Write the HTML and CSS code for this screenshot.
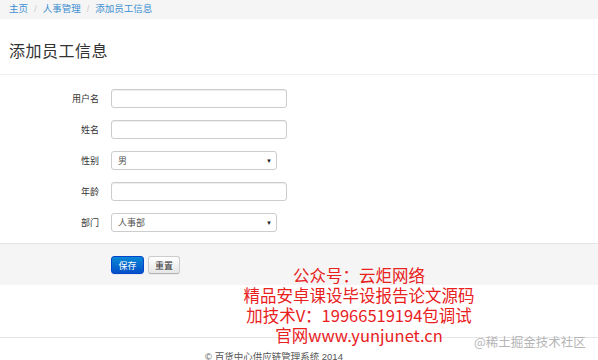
FILE: index.html
```html
<!DOCTYPE html>
<html lang="zh-CN">
<head>
    <meta charset="UTF-8">
    <meta name="viewport" content="width=device-width, initial-scale=1.0">
    <title>添加员工信息</title>
    <link rel="stylesheet" href="styles.css">
</head>
<body>

    <ul class="breadcrumb">
        <li><a href="#">主页</a><span class="divider">/</span></li>
        <li><a href="#">人事管理</a><span class="divider">/</span></li>
        <li><a href="#">添加员工信息</a></li>
    </ul>

    <div class="page-header">
        <h1>添加员工信息</h1>
    </div>

    <form class="form-horizontal">
        <div class="control-group">
            <label>用户名</label>
            <input type="text">
        </div>
        <div class="control-group">
            <label>姓名</label>
            <input type="text">
        </div>
        <div class="control-group">
            <label>性别</label>
            <div class="select"><span>男</span><i>▼</i></div>
        </div>
        <div class="control-group">
            <label>年龄</label>
            <input type="text">
        </div>
        <div class="control-group">
            <label>部门</label>
            <div class="select"><span>人事部</span><i>▼</i></div>
        </div>

        <div class="form-actions">
            <button type="button" class="btn btn-primary">保存</button>
            <button type="button" class="btn">重置</button>
        </div>
    </form>

    <div class="footer">© 百货中心供应链管理系统 2014</div>

    <div class="promo">
        公众号：云炬网络<br>
        精品安卓课设毕设报告论文源码<br>
        加技术V：19966519194包调试<br>
        官网www.yunjunet.cn
    </div>
    <div class="mark">@稀土掘金技术社区</div>

</body>
</html>
```

FILE: styles.css
```css
body {
    margin: 0;
    font-family: "Liberation Sans", "Noto Sans CJK SC", sans-serif;
    color: #333;
    background: white;
    position: relative;
    height: 360px;
    overflow: hidden;
}
.breadcrumb {
    margin: 0;
    padding: 0 9px;
    height: 19px;
    line-height: 18px;
    list-style: none;
    background-color: #f5f5f5;
    font-size: 9.5px;
    display: flex;
}
.breadcrumb a {
    color: #3d8fd1;
    text-decoration: none;
}
.breadcrumb .divider {
    color: #ccc;
    padding: 0 6px;
}
.page-header {
    height: 55px;
    padding: 0 9px;
    border-bottom: 1px solid #eee;
    display: flex;
    align-items: center;
}
.page-header h1 {
    margin: 6px 0 0 0;
    font-size: 16px;
    font-weight: normal;
    color: #333;
    letter-spacing: 0.5px;
}
.form-horizontal {
    margin: 0;
    padding-top: 14px;
}
.control-group {
    display: flex;
    align-items: center;
    gap: 12px;
    height: 19px;
    margin-bottom: 12px;
}
.control-group label {
    width: 99px;
    text-align: right;
    font-size: 9px;
    color: #333;
}
.control-group input {
    box-sizing: border-box;
    width: 176px;
    height: 19px;
    margin: 0;
    border: 1px solid #ccc;
    border-radius: 3px;
    box-shadow: inset 0 1px 1px rgba(0, 0, 0, 0.075);
}
.select {
    box-sizing: border-box;
    width: 166px;
    height: 19px;
    border: 1px solid #ccc;
    border-radius: 3px;
    background: white;
    display: flex;
    align-items: center;
    justify-content: space-between;
    padding: 0 4px 0 6px;
    font-size: 9px;
    color: #555;
}
.select i {
    font-style: normal;
    font-size: 6px;
    color: #222;
}
.form-actions {
    margin-top: -1px;
    height: 42px;
    box-sizing: border-box;
    padding: 12px 0 0 111px;
    background-color: #f5f5f5;
    border-top: 1px solid #e5e5e5;
    display: flex;
    align-items: flex-start;
    gap: 4px;
}
.btn {
    height: 18px;
    padding: 0 6px;
    font-family: inherit;
    font-size: 9px;
    color: #333;
    border: 1px solid #ccc;
    border-bottom-color: #b3b3b3;
    border-radius: 3px;
    background: linear-gradient(#ffffff, #e6e6e6);
    box-shadow: 0 1px 1px rgba(0, 0, 0, 0.05);
    cursor: pointer;
}
.btn-primary {
    width: 33px;
    color: white;
    border-color: #0044cc;
    background: linear-gradient(#0a88d6, #0450c8);
}
.footer {
    margin-top: 52px;
    border-top: 1px solid #e5e5e5;
    padding: 11px 0 0 205px;
    font-size: 9.5px;
    color: #555;
}
.promo {
    position: absolute;
    top: 265px;
    left: 230px;
    width: 258px;
    text-align: center;
    font-family: "Noto Sans CJK SC", sans-serif;
    font-size: 16.5px;
    line-height: 20px;
    color: #e8211d;
}
.mark {
    position: absolute;
    top: 332px;
    left: 474px;
    font-family: "Noto Sans CJK SC", sans-serif;
    font-size: 12.5px;
    color: #b5b5b5;
}
```
